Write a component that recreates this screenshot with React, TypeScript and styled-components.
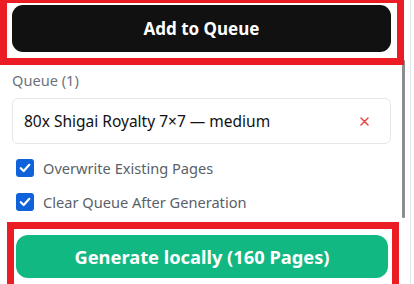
import React from "react";
import styled, { createGlobalStyle } from "styled-components";

const Global = createGlobalStyle`
  html, body { margin: 0; padding: 0; background: #ffffff; overflow: hidden; }
  * { box-sizing: border-box; }
`;

const Frame = styled.div`
  width: 414px;
  height: 284px;
  display: flex;
  overflow: hidden;
  font-family: "Noto Sans", "Open Sans", sans-serif;
`;

const Panel = styled.div`
  position: relative;
  width: 411px;
  height: 284px;
  border-right: 1px solid #e6e7ea;
  display: flex;
  flex-direction: column;
`;

const ScrollThumb = styled.div`
  position: absolute;
  left: 402px;
  top: 60px;
  width: 3px;
  height: 158px;
  background: #8d8d8d;
  border-radius: 1px;
`;

const Highlight = styled.div<{ $ml: number; $w: number; $pad: string; $mt: number }>`
  position: relative;
  z-index: 1;
  margin-left: ${(p) => p.$ml}px;
  margin-top: ${(p) => p.$mt}px;
  width: ${(p) => p.$w}px;
  border: 7px solid #ec1c24;
  padding: ${(p) => p.$pad};
  background: #ffffff;
  flex-shrink: 0;
`;

const ActionButton = styled.button<{ $bg: string; $h: number; $r: number; $fs: number }>`
  display: flex;
  align-items: center;
  justify-content: center;
  width: 100%;
  height: ${(p) => p.$h}px;
  border: none;
  border-radius: ${(p) => p.$r}px;
  background: ${(p) => p.$bg};
  color: #ffffff;
  font-family: "Noto Sans", "Open Sans", sans-serif;
  font-weight: 700;
  font-size: ${(p) => p.$fs}px;
  padding: 0;
  cursor: pointer;
`;

const Section = styled.div`
  padding: 5px 0 0 12px;
  width: 391px;
  display: flex;
  flex-direction: column;
`;

const Label = styled.div`
  font-size: 14.6px;
  line-height: 20px;
  color: #6b7280;
  margin-bottom: 8px;
`;

const QueueItem = styled.div`
  display: flex;
  align-items: center;
  justify-content: space-between;
  height: 46px;
  width: 379px;
  border: 1px solid #e5e7eb;
  border-radius: 6px;
  padding: 0 21px 0 11px;
  font-size: 15.5px;
  color: #111111;
`;

const RemoveIcon = styled.svg`
  width: 9px;
  height: 9px;
  display: block;
`;

const Options = styled.div`
  display: flex;
  flex-direction: column;
  gap: 14px;
  padding: 14px 0 0 4px;
`;

const OptionRow = styled.label`
  display: flex;
  align-items: center;
  gap: 9px;
  height: 20px;
  font-size: 14.6px;
  color: #5a5f69;
`;

const Box = styled.span`
  width: 18px;
  height: 18px;
  border-radius: 3px;
  background: #0f62d9;
  display: flex;
  align-items: center;
  justify-content: center;
  flex-shrink: 0;
`;

const Check: React.FC<{ text: string }> = ({ text }) => (
  <OptionRow>
    <Box>
      <svg width="14" height="14" viewBox="0 0 14 14">
        <path d="M2.8 7.2 L5.7 10 L11.3 3.8" fill="none" stroke="#fff" strokeWidth="2.2" strokeLinecap="round" strokeLinejoin="round" />
      </svg>
    </Box>
    {text}
  </OptionRow>
);

export default function App() {
  return (
    <>
      <Global />
      <Frame>
        <Panel>
          <ScrollThumb />
          <Highlight $ml={0} $mt={-4} $w={404} $pad="2px 6px 6px 5px">
            <ActionButton $bg="#111111" $h={47} $r={11} $fs={17}>
              Add to Queue
            </ActionButton>
          </Highlight>
          <Section>
            <Label>Queue (1)</Label>
            <QueueItem>
              <span>80x Shigai Royalty 7×7 — medium</span>
              <RemoveIcon viewBox="0 0 9 9">
                <path d="M1 1 L8 8 M8 1 L1 8" stroke="#ef4444" strokeWidth="1.5" strokeLinecap="round" />
              </RemoveIcon>
            </QueueItem>
            <Options>
              <Check text="Overwrite Existing Pages" />
              <Check text="Clear Queue After Generation" />
            </Options>
          </Section>
          <Highlight $ml={7} $mt={10} $w={392} $pad="6px 4px 6px 2px">
            <ActionButton $bg="#12b882" $h={43} $r={12} $fs={18.3}>
              Generate locally (160 Pages)
            </ActionButton>
          </Highlight>
        </Panel>
      </Frame>
    </>
  );
}
